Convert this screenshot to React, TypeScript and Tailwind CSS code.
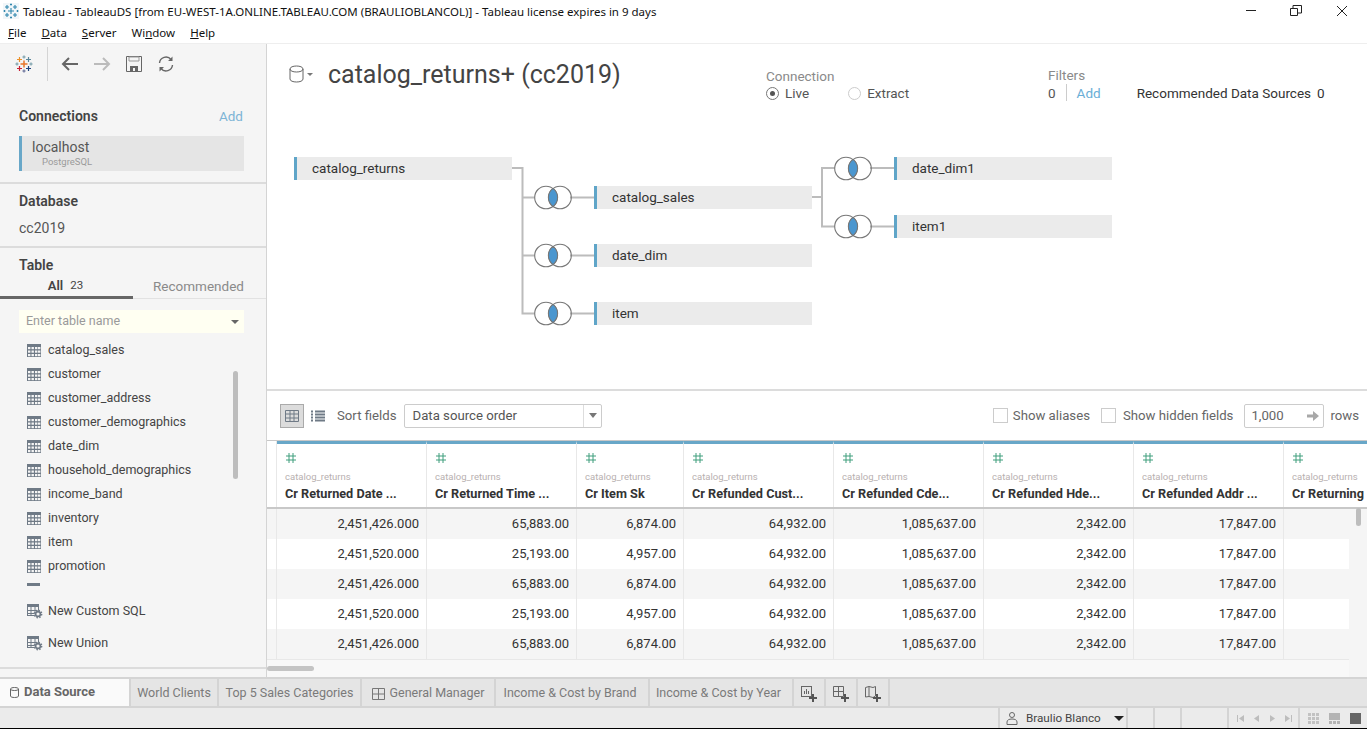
import React from "react";

const T = "font-['Roboto',sans-serif]";
const UI = "font-['Noto_Sans',sans-serif]";

function TableIcon() {
  return (
    <svg width="14" height="13" viewBox="0 0 14 13" className="shrink-0">
      <rect x="0" y="0" width="14" height="13" fill="#6f7a86" />
      {[1, 4.5, 8, 11].map((x, i) =>
        [3, 6.5, 10].map((y) => <rect key={`${i}-${y}`} x={x} y={y} width="2.4" height="2.2" fill="#f5f5f5" />)
      )}
    </svg>
  );
}

function GearTableIcon() {
  return (
    <svg width="16" height="15" viewBox="0 0 16 15" className="shrink-0">
      <rect x="0.5" y="0.5" width="11" height="11" fill="none" stroke="#6f7a86" />
      <rect x="0" y="0" width="12" height="3" fill="#6f7a86" />
      <path d="M4 3v8M8 3v8M0 6.5h12M0 9.5h8" stroke="#6f7a86" strokeWidth="1" />
      <circle cx="11" cy="10" r="3.6" fill="#f5f5f5" />
      <circle cx="11" cy="10" r="2.4" fill="none" stroke="#6f7a86" strokeWidth="1.6" />
      <circle cx="11" cy="10" r="3.7" fill="none" stroke="#6f7a86" strokeWidth="1.4" strokeDasharray="1.5 1.4" />
    </svg>
  );
}

function Logo() {
  const plus = (x: number, y: number, s: number, c: string, w = 1.2) => (
    <path key={`${x}-${y}`} d={`M${x - s} ${y}H${x + s}M${x} ${y - s}V${y + s}`} stroke={c} strokeWidth={w} />
  );
  return (
    <svg width="18" height="18" viewBox="0 0 18 18">
      {plus(9, 9, 3.5, "#e8762b", 1.5)}
      {plus(4.5, 4.5, 2.5, "#eb912b")}
      {plus(13.5, 4.5, 2.5, "#5b879b")}
      {plus(4.5, 13.5, 2.5, "#c72035")}
      {plus(13.5, 13.5, 2.5, "#1f447e")}
      {plus(9, 2, 1.6, "#7099a6", 1)}
      {plus(9, 16, 1.6, "#5b6591", 1)}
      {plus(2, 9, 1.6, "#7099a6", 1)}
      {plus(16, 9, 1.6, "#7099a6", 1)}
    </svg>
  );
}

function WinIcon() {
  const p = (x: number, y: number, s: number) => (
    <path key={`${x}-${y}`} d={`M${x - s} ${y}H${x + s}M${x} ${y - s}V${y + s}`} stroke="#2f86ad" strokeWidth="1.1" />
  );
  return (
    <svg width="16" height="16" viewBox="0 0 16 16" className="shrink-0">
      <rect x="0" y="0" width="16" height="16" fill="#f1f6f9" />
      {p(8, 8, 3)}
      {p(4, 4, 2)}
      {p(12, 4, 2)}
      {p(4, 12, 2)}
      {p(12, 12, 2)}
      {p(8, 1.5, 1)}
      {p(8, 14.5, 1)}
      {p(1.5, 8, 1)}
      {p(14.5, 8, 1)}
    </svg>
  );
}

function JoinNode({ className, name }: { className: string; name: string }) {
  return (
    <div className={`absolute w-[218px] h-[23px] bg-[#ebebeb] border-l-[3px] border-[#5fa5c8] pl-[15px] flex items-center text-[13.5px] text-[#333] ${T} ${className}`}>
      {name}
    </div>
  );
}

function Venn({ x, y }: { x: number; y: number }) {
  return (
    <g transform={`translate(${x} ${y})`}>
      <circle cx="-7" cy="0" r="11.3" fill="#fff" stroke="#777" strokeWidth="1.1" />
      <circle cx="7" cy="0" r="11.3" fill="none" stroke="#777" strokeWidth="1.1" />
      <path d="M0 -9.1A11.3 11.3 0 0 1 0 9.1A11.3 11.3 0 0 1 0 -9.1Z" fill="#4a96cf" stroke="#777" strokeWidth="1.1" />
    </g>
  );
}

function Canvas() {
  // page coordinates minus (267, 107)
  return (
    <div className="relative flex-1">
      <svg className="absolute left-0 top-0" width="900" height="240" viewBox="267 107 900 240">
        <g stroke="#bcbcbc" strokeWidth="2" fill="none">
          <path d="M512 168H522.5V313.5H536M522 197.5H536M522 255.5H536" />
          <path d="M570 197.5H594M570 255.5H594M570 313.5H594" />
          <path d="M812 197H822V168H836M822 197V226.5H836" />
          <path d="M870 168H894M870 226.5H894" />
        </g>
        <Venn x={553} y={197.5} />
        <Venn x={553} y={255.5} />
        <Venn x={553} y={313.5} />
        <Venn x={853} y={168.5} />
        <Venn x={853} y={226.5} />
      </svg>
      <JoinNode className="left-[27px] top-[50px]" name="catalog_returns" />
      <JoinNode className="left-[327px] top-[79px]" name="catalog_sales" />
      <JoinNode className="left-[327px] top-[137px]" name="date_dim" />
      <JoinNode className="left-[327px] top-[195px]" name="item" />
      <JoinNode className="left-[627px] top-[50px]" name="date_dim1" />
      <JoinNode className="left-[627px] top-[108px]" name="item1" />
    </div>
  );
}

const columns = [
  { w: "w-[150px]", name: "Cr Returned Date ...", a: "2,451,426.000", b: "2,451,520.000" },
  { w: "w-[150px]", name: "Cr Returned Time ...", a: "65,883.00", b: "25,193.00" },
  { w: "w-[107px]", name: "Cr Item Sk", a: "6,874.00", b: "4,957.00" },
  { w: "w-[150px]", name: "Cr Refunded Cust...", a: "64,932.00", b: "64,932.00" },
  { w: "w-[150px]", name: "Cr Refunded Cde...", a: "1,085,637.00", b: "1,085,637.00" },
  { w: "w-[150px]", name: "Cr Refunded Hde...", a: "2,342.00", b: "2,342.00" },
  { w: "w-[150px]", name: "Cr Refunded Addr ...", a: "17,847.00", b: "17,847.00" },
];

function Header({ w, name }: { w: string; name: string }) {
  return (
    <div className={`${w} shrink-0 h-full border-r border-[#e8e8e8] border-t-[3px] border-t-[#68a7c8] pl-[8px] ${T}`}>
      <svg width="12" height="12" viewBox="0 0 12 12" className="mt-[8px]">
        <path d="M4 1v10M8 1v10M1 4h10M1 8h10" stroke="#3f9e7d" strokeWidth="1" />
      </svg>
      <div className="text-[9.5px] leading-[12px] mt-[7px] text-[#b8b0b0]">catalog_returns</div>
      <div className="text-[12.7px] leading-[16px] mt-[3px] font-bold text-[#333] whitespace-nowrap">{name}</div>
    </div>
  );
}

function Row({ alt }: { alt: boolean }) {
  return (
    <div className={`flex h-[30px] ${alt ? "bg-[#f5f5f5]" : "bg-white"}`}>
      <div className="w-[10px] shrink-0 border-r border-[#e8e8e8]" />
      {columns.map((c) => (
        <div key={c.name} className={`${c.w} shrink-0 border-r border-[#e8e8e8] flex items-center justify-end pr-[7px] text-[13px] text-[#333] ${T}`}>
          {alt ? c.a : c.b}
        </div>
      ))}
    </div>
  );
}

function Tab({ w, children }: { w: string; children: React.ReactNode }) {
  return (
    <div className={`${w} shrink-0 h-full border-r-2 border-[#d4d4d4] flex items-center justify-center pt-[2px] text-[12.5px] text-[#7a7a7a] ${T}`}>
      {children}
    </div>
  );
}

function AddIcon({ kind }: { kind: "sheet" | "dash" | "story" }) {
  return (
    <svg width="16" height="16" viewBox="0 0 16 16">
      {kind === "sheet" && (
        <>
          <rect x="0.5" y="0.5" width="10" height="10" fill="none" stroke="#666" />
          <path d="M3.5 8V5M5.5 8V3M7.5 8V5" stroke="#666" />
        </>
      )}
      {kind === "dash" && <path d="M0.5 0.5h10v10h-10zM0.5 5.5h10M5.5 0.5v10" fill="none" stroke="#666" />}
      {kind === "story" && <path d="M0.5 1.5L4 0.5L8 1.5L10.5 0.5V10L8 11.5L4 10.5L0.5 11Z M4 0.5V10.5" fill="none" stroke="#666" />}
      <path d="M12 8v8M8 12h8" stroke="#555" strokeWidth="2" />
    </svg>
  );
}

const tables = ["catalog_sales", "customer", "customer_address", "customer_demographics", "date_dim", "household_demographics", "income_band", "inventory", "item", "promotion"];

function Sidebar() {
  return (
    <aside className={`w-[267px] shrink-0 bg-[#f5f5f5] border-r border-[#d4d4d4] flex flex-col ${T}`}>
      <div className="h-[40px] flex items-center pl-[15px] shrink-0">
        <Logo />
        <div className="w-px h-[34px] bg-[#d4d4d4] ml-[14px] mr-[13px]" />
        <svg width="18" height="16" viewBox="0 0 18 16"><path d="M17 8H2M8 2L2 8l6 6" fill="none" stroke="#666" strokeWidth="2" /></svg>
        <svg width="18" height="16" viewBox="0 0 18 16" className="ml-[14px]"><path d="M1 8h15M10 2l6 6-6 6" fill="none" stroke="#bbb" strokeWidth="2" /></svg>
        <svg width="16" height="16" viewBox="0 0 16 16" className="ml-[15px]"><path d="M.5.5h15v15H.5z" fill="none" stroke="#666" /><path d="M3 1h10v4H3z" fill="none" stroke="#999" /><path d="M4 10h8v5H4z" fill="#666" /><path d="M7 12h2v3H7z" fill="#f5f5f5" /></svg>
        <svg width="18" height="18" viewBox="0 0 18 18" className="ml-[15px]"><path d="M2.5 8A6.5 6.5 0 0 1 14 4.5M15.5 10A6.5 6.5 0 0 1 4 13.5" fill="none" stroke="#666" strokeWidth="1.4" /><path d="M15.5 1.5v4.500h-4.500zM2.500 16.500v-4.500h4.500z" fill="#666" /></svg>
      </div>
      <div className="px-[19px] pr-[22px] pt-[24px] pb-[11px] border-b-2 border-[#dcdcdc]">
        <div className="flex justify-between items-center h-[16px] mb-[12px]">
          <span className="text-[14px] font-semibold text-[#444]">Connections</span>
          <span className="text-[13.5px] text-[#7db4d6] mr-px">Add</span>
        </div>
        <div className="h-[35px] bg-[#e5e5e5] border-l-[3px] border-[#68a7c8] pl-[10px]">
          <div className="text-[14px] leading-[18px] pt-[2px] text-[#555]">localhost</div>
          <div className="text-[9.5px] leading-[11px] pl-[10px] text-[#9a9a9a]">PostgreSQL</div>
        </div>
      </div>
      <div className="px-[19px] pt-[8px] h-[64px] border-b-2 border-[#dcdcdc] shrink-0">
        <div className="text-[14px] leading-[18px] font-semibold text-[#444]">Database</div>
        <div className="text-[14px] leading-[18px] mt-[9px] text-[#555]">cc2019</div>
      </div>
      <div className="pt-[8px] relative flex-1 flex flex-col">
        <div className="text-[14px] leading-[18px] font-semibold text-[#444] px-[19px]">Table</div>
        <div className="flex h-[25px] border-b border-[#e2e2e2]">
          <div className="w-[133px] h-[25px] border-b-[3px] border-[#666] flex justify-center items-center gap-[7px] pr-[2px] pt-[1px]">
            <span className="text-[13px] font-semibold text-[#444]">All</span>
            <span className="text-[11.5px] text-[#444]">23</span>
          </div>
          <div className="flex-1 flex justify-center items-center pr-[2px] pt-[1px] text-[13.5px] text-[#8a8a8a]">Recommended</div>
        </div>
        <div className="mx-[19px] mr-[22px] mt-[11px] h-[23px] bg-[#fffff2] flex items-center justify-between px-[7px] pr-[5px] text-[12.5px] text-[#9a9a9a]">
          <span>Enter table name</span>
          <span className="w-0 h-0 border-x-[4px] border-x-transparent border-t-[4px] border-t-[#666]" />
        </div>
        <div className="pt-[5px] pl-[27px]">
          {tables.map((t) => (
            <div key={t} className="h-[24px] flex items-center gap-[7px] text-[12.5px] text-[#444]">
              <TableIcon />
              <span>{t}</span>
            </div>
          ))}
          <div className="w-[13px] h-[3px] bg-[#6f7a86] mt-[5px]" />
        </div>
        <div className="pl-[27px] mt-[15px]">
          <div className="h-[20px] flex items-center gap-[5px] text-[12.5px] text-[#444]"><GearTableIcon /><span>New Custom SQL</span></div>
          <div className="h-[20px] flex items-center gap-[5px] mt-[12px] text-[12.5px] text-[#444]"><GearTableIcon /><span>New Union</span></div>
        </div>
        <div className="mt-[14px] border-b-2 border-[#dcdcdc]" />
        <div className="absolute right-[28px] top-[123px] w-[5px] h-[108px] rounded-full bg-[#bdbdbd]" />
      </div>
    </aside>
  );
}

function Main() {
  return (
    <main className="flex-1 min-w-0 flex flex-col bg-white">
      <div className="h-[347px] shrink-0 flex flex-col border-b-2 border-[#dcdcdc]">
        <div className="h-[63px] shrink-0 flex items-start relative">
          <div className="flex items-center pl-[22px] pt-[21px] w-[61px]">
            <svg width="16" height="18" viewBox="0 0 16 18" className="shrink-0">
              <path d="M1 4v10c0 4 13 4 13 0V4M1 4c0-4 13-4 13 0s-13 4-13 0Z" fill="none" stroke="#666" />
            </svg>
            <span className="ml-[2px] w-0 h-0 border-x-[3px] border-x-transparent border-t-[3px] border-t-[#777]" />
          </div>
          <div className={`text-[25px] leading-[30px] pt-[16px] text-[#444] whitespace-nowrap ${T}`}>catalog_returns+ (cc2019)</div>
          <div className={`absolute left-[499px] top-[24px] text-[13.5px] leading-[16px] text-[#555] ${T}`}>
            <div className="text-[#8a8a8a]">Connection</div>
            <div className="flex items-center mt-[1px]">
              <span className="w-[13px] h-[13px] rounded-full border border-[#777] flex items-center justify-center"><span className="w-[5px] h-[5px] rounded-full bg-[#555]" /></span>
              <span className="ml-[6px]">Live</span>
              <span className="w-[13px] h-[13px] rounded-full border border-[#ccc] ml-[39px]" />
              <span className="ml-[6px]">Extract</span>
            </div>
          </div>
          <div className={`absolute left-[781px] top-[23px] text-[13.5px] leading-[16px] text-[#555] ${T}`}>
            <div className="text-[#8a8a8a]">Filters</div>
            <div className="flex items-center mt-[1px]">
              <span>0</span>
              <span className="w-px h-[17px] bg-[#ccc] mx-[10px]" />
              <span className="text-[#6aaed6]">Add</span>
              <span className="ml-[36px] text-[#333] whitespace-nowrap">Recommended Data Sources</span>
              <span className="ml-[6px] text-[#333]">0</span>
            </div>
          </div>
        </div>
        <Canvas />
      </div>
      <div className={`h-[49px] shrink-0 flex items-center pl-[13px] pr-[8px] text-[13.2px] text-[#666] ${T}`}>
        <span className="w-[24px] h-[24px] bg-[#dcdcdc] border border-[#aaa] flex items-center justify-center">
          <svg width="14" height="12" viewBox="0 0 14 12"><path d="M.5.5h13v11H.5zM.5 4h13M.5 8h13M5 .5v11M9 .5v11" fill="none" stroke="#6f7a86" /></svg>
        </span>
        <svg width="14" height="12" viewBox="0 0 14 12" className="ml-[7px]"><path d="M0 1.500h2M4 1.500h10M0 4.500h2M4 4.500h10M0 7.500h2M4 7.500h10M0 10.500h2M4 10.500h10" stroke="#6f7a86" strokeWidth="2" /></svg>
        <span className="ml-[12px]">Sort fields</span>
        <div className="ml-[8px] w-[198px] h-[24px] border border-[#ccc] rounded-[2px] flex items-center text-[#555]">
          <span className="flex-1 pl-[7px]">Data source order</span>
          <span className="w-[18px] h-full border-l border-[#ddd] flex items-center justify-center">
            <span className="w-0 h-0 border-x-[4px] border-x-transparent border-t-[5px] border-t-[#777]" />
          </span>
        </div>
        <div className="flex-1" />
        <span className="w-[15px] h-[15px] border border-[#ccc]" />
        <span className="ml-[5px]">Show aliases</span>
        <span className="w-[15px] h-[15px] border border-[#ccc] ml-[11px]" />
        <span className="ml-[7px]">Show hidden fields</span>
        <div className="ml-[11px] w-[80px] h-[24px] border border-[#ccc] rounded-[2px] flex items-center justify-between pl-[6px] pr-[4px]">
          <span>1,000</span>
          <svg width="12" height="10" viewBox="0 0 12 10"><path d="M0 3.500h6V0l6 5-6 5V6.500H0z" fill="#a8a8a8" /></svg>
        </div>
        <span className="ml-[6px]">rows</span>
      </div>
      <div className="flex-1 min-h-0 flex flex-col overflow-hidden bg-[#f5f5f5] relative">
        <div className="h-[69px] shrink-0 flex bg-white border-t border-[#c8c8c8] border-b-2 border-b-[#c8c8c8]">
          <div className="w-[10px] shrink-0 border-r border-[#e8e8e8]" />
          {columns.map((c) => <Header key={c.name} w={c.w} name={c.name} />)}
          <div className="flex-1 min-w-0 overflow-hidden"><Header w="w-[120px]" name="Cr Returning" /></div>
        </div>
        <div className="w-[1082px]">
          {[true, false, true, false, true].map((a, i) => <Row key={i} alt={a} />)}
        </div>
        <div className="w-[1082px] h-[18px] bg-[#f8f8f8] border-t border-[#e8e8e8] pt-[6px] shrink-0">
          <div className="w-[47px] h-[5px] rounded-full bg-[#c4c4c4]" />
        </div>
        <div className="absolute right-[6px] top-[68px] w-[5px] h-[18px] rounded-full bg-[#bdbdbd]" />
      </div>
    </main>
  );
}

function Tabs() {
  return (
    <div className="h-[31px] shrink-0 flex bg-[#e5e5e5] border-t-2 border-b-2 border-[#d4d4d4]">
      <div className={`w-[131px] shrink-0 h-full bg-[#fafafa] border-r-2 border-[#d4d4d4] flex items-center pl-[10px] pb-[1px] gap-[5px] text-[13px] font-bold text-[#666] ${T}`}>
        <svg width="9" height="11" viewBox="0 0 9 11"><path d="M.5 2v7c0 2 8 2 8 0V2M.5 2c0-2 8-2 8 0s-8 2-8 0Z" fill="none" stroke="#666" /></svg>
        Data Source
      </div>
      <Tab w="w-[88px]">World Clients</Tab>
      <Tab w="w-[143px]">Top 5 Sales Categories</Tab>
      <Tab w="w-[134px]">
        <svg width="13" height="12" viewBox="0 0 13 12" className="mr-[5px]"><path d="M.5.5h12v11H.5zM.5 6h12M6.500.5v11" fill="none" stroke="#777" /></svg>
        General Manager
      </Tab>
      <Tab w="w-[154px]"><span className="mr-[4px]">Income &amp; Cost by Brand</span></Tab>
      <Tab w="w-[144px]"><span className="mr-[5px]">Income &amp; Cost by Year</span></Tab>
      <Tab w="w-[32px]"><AddIcon kind="sheet" /></Tab>
      <Tab w="w-[32px]"><AddIcon kind="dash" /></Tab>
      <Tab w="w-[32px]"><AddIcon kind="story" /></Tab>
    </div>
  );
}

function Status() {
  const sep = "h-full border-l-2 border-[#d4d4d4]";
  return (
    <div className={`h-[21px] shrink-0 bg-[#ebebeb] flex justify-end border-b border-black text-[11.7px] text-[#444] ${T}`}>
      <div className={`${sep} w-[128px] flex items-center pl-[6px]`}>
        <svg width="12" height="13" viewBox="0 0 12 13"><circle cx="6" cy="3" r="2.500" fill="none" stroke="#666" /><path d="M1 12.500V10c0-2 2-3 5-3s5 1 5 3v2.500z" fill="none" stroke="#666" /></svg>
        <span className="ml-[8px] pt-[1px]">Braulio Blanco</span>
        <span className="ml-[13px] w-0 h-0 border-x-[5px] border-x-transparent border-t-[5px] border-t-[#222]" />
      </div>
      <div className={`${sep} w-[27px]`} />
      <div className={`${sep} w-[27px]`} />
      <div className={`${sep} w-[47px]`} />
      <div className={`${sep} w-[71px] flex items-center gap-[9px] pl-[8px]`}>
        {["M0 0h1v7H0zM7 0v7L2 3.500z", "M6 0v7L1 3.500z", "M1 0v7l5-3.500z", "M0 0v7l5-3.500zM6 0h1v7H6z"].map((d) => (
          <svg key={d} width="7" height="7" viewBox="0 0 7 7"><path d={d} fill="#bdbdbd" /></svg>
        ))}
      </div>
      <div className={`${sep} w-[69px] flex items-center gap-[10px] pl-[8px]`}>
        <svg width="11" height="11" viewBox="0 0 11 11"><path d="M0 0h3v3H0zM4 0h3v3H4zM8 0h3v3H8zM0 4h3v3H0zM4 4h3v3H4zM8 4h3v3H8zM0 8h3v3H0zM4 8h3v3H4zM8 8h3v3H8z" fill="#c2c2c2" /></svg>
        <svg width="11" height="11" viewBox="0 0 11 11"><path d="M0 0h11v7H0zM0 8h3v3H0zM4 8h3v3H4zM8 8h3v3H8z" fill="#b4b4b4" /></svg>
        <svg width="11" height="11" viewBox="0 0 11 11"><path d="M0 0h11v11H0z" fill="#666" /></svg>
      </div>
    </div>
  );
}

export default function App() {
  return (
    <div className="w-[1367px] h-[729px] flex flex-col bg-white overflow-hidden">
      <div className={`h-[22px] shrink-0 flex items-center pl-[3px] text-[11.5px] text-[#111] ${UI}`}>
        <WinIcon />
        <span className="ml-[4px] pt-[2px] whitespace-nowrap">Tableau - TableauDS [from EU-WEST-1A.ONLINE.TABLEAU.COM (BRAULIOBLANCOL)] - Tableau license expires in 9 days</span>
        <div className="flex-1" />
        <svg width="12" height="12" viewBox="0 0 12 12" className="mr-[33px]"><path d="M1 5.500h10" stroke="#222" /></svg>
        <svg width="12" height="12" viewBox="0 0 12 12" className="mr-[34px]"><path d="M.5 3.500h7v7h-7zM3 3V.5h8.500v7.500H8" fill="none" stroke="#222" /></svg>
        <svg width="12" height="12" viewBox="0 0 12 12" className="mr-[19px]"><path d="M1 1l10 10M11 1L1 11" stroke="#222" /></svg>
      </div>
      <div className={`h-[22px] shrink-0 flex items-center pl-[8px] pt-[1px] gap-[15px] text-[11.5px] text-[#111] border-b border-[#eeeeee] ${UI}`}>
        <span><u>F</u>ile</span>
        <span><u>D</u>ata</span>
        <span><u>S</u>erver</span>
        <span>Wi<u>n</u>dow</span>
        <span><u>H</u>elp</span>
      </div>
      <div className="flex-1 min-h-0 flex">
        <Sidebar />
        <Main />
      </div>
      <Tabs />
      <Status />
    </div>
  );
}
